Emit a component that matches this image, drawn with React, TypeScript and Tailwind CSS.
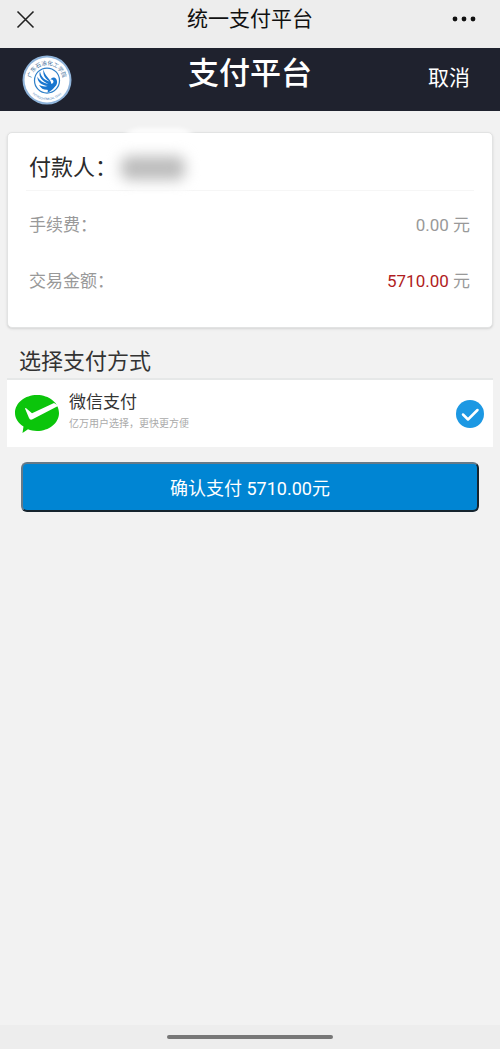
import { useState } from "react"

function SchoolLogo() {
  return (
    <svg viewBox="0 0 100 100" className="h-[50px] w-[50px]" role="img" aria-label="广东石油化工学院">
      <defs>
        <path id="logo-top" d="M18 52 A32 32 0 0 1 82 52" />
        <path id="logo-bottom" d="M8 48 A42 42 0 0 0 92 48" />
      </defs>
      <circle cx="50" cy="50" r="49" fill="#8fb4da" />
      <circle cx="50" cy="50" r="45" fill="#fff" />
      <text fontSize="11" fill="#3f6f9c">
        <textPath href="#logo-top" startOffset="50%" textAnchor="middle">
          广东石油化工学院
        </textPath>
      </text>
      <text fontSize="6" fill="#4f86bd">
        <textPath href="#logo-bottom" startOffset="50%" textAnchor="middle">
          PETROCHEMICAL TECH
        </textPath>
      </text>
      <circle cx="50" cy="51" r="25" fill="#fff" stroke="#2f80c8" strokeWidth="2.5" />
      {/* wings */}
      <path
        d="M43 29 C41 42 48 48 55 53 C47 51 38 45 36 33 C32 43 40 52 53 58 C43 56 34 51 31 43 C30 54 40 61 52 62 C46 64 40 63 34 60 C39 69 48 72 57 68 C67 66 73 57 69 49 C66 43 58 44 57 50 C60 48 63 50 63 54 C62 59 58 59 58 55 C57 48 46 43 43 29 Z"
        fill="#1976cf"
      />
      <path d="M45 65 C55 61 62 58 66 52 C69 62 62 71 51 75 C53 70 51 67 45 65 Z" fill="#1976cf" />
    </svg>
  )
}

function WechatPayIcon() {
  return (
    <svg viewBox="0 0 44 38" className="h-[38px] w-11 shrink-0" aria-hidden="true">
      <path
        d="M22 0 C34 0 44 7.8 44 18 C44 28.200 34 36 22 36 C18.500 36 15.500 35.400 13 34.300 L7.500 38 L8.500 31.500 C3.300 28.300 0 23.500 0 18 C0 7.800 10 0 22 0 Z"
        fill="#0bc50b"
      />
      <path d="M10 13.500 Q10.500 12.500 12 14 L17 18.200 L39 8 L43.500 10.700 L17.500 24.300 Q15 25.500 14 23 Z" fill="#fff" />
    </svg>
  )
}

function TitleBar() {
  return (
    <div className="grid h-12 grid-cols-[1fr_auto_1fr] items-center bg-[#ededed] px-4 pb-[10px]">
      <button type="button" aria-label="关闭" className="h-[19px] w-[19px]">
        <svg viewBox="0 0 19 19" fill="none" stroke="#222" strokeWidth="1.600">
          <path d="M1.500 1.500 L17.500 17.500 M17.500 1.500 L1.500 17.500" />
        </svg>
      </button>
      <h1 className="text-[21px] leading-8 text-[#111]">统一支付平台</h1>
      <button type="button" aria-label="更多" className="mr-2 justify-self-end">
        <svg viewBox="0 0 24 6" className="h-[6px] w-6" fill="#111">
          <circle cx="3" cy="3" r="2.400" />
          <circle cx="12" cy="3" r="2.400" />
          <circle cx="21" cy="3" r="2.400" />
        </svg>
      </button>
    </div>
  )
}

export default function App() {
  const [method, setMethod] = useState("wechat")

  return (
    <div className="flex min-h-screen flex-col bg-[#f2f2f2] font-[Roboto,'Noto_Sans_CJK_SC',sans-serif]">
      <TitleBar />

      <header className="grid h-[63px] grid-cols-[1fr_auto_1fr] items-center bg-[#1f222e] px-[22px]">
        <SchoolLogo />
        <h2 className="pb-3 text-[31px] leading-10 font-medium text-white">支付平台</h2>
        <button type="button" className="mr-2 justify-self-end pb-1 text-[21px] leading-8 text-white">
          取消
        </button>
      </header>

      <main className="flex flex-1 flex-col px-[7px] pt-[21px]">
        <section className="rounded-[5px] border border-[#e2e3e3] bg-white px-[18px] pb-6 shadow-sm">
          <div className="flex h-[58px] items-center border-b border-[#f6f6f6] px-[3px] pt-3 text-[22px] leading-8 text-[#2b2b2b]">
            <span>付款人：</span>
            {/* payer name stays masked */}
            <span className="relative h-8 w-[84px]" aria-hidden="true">
              <span className="absolute -top-6 right-0 -bottom-2 left-0 rounded-3xl bg-white/80 blur-[2px]" />
              <span className="absolute top-1 right-4 bottom-1 left-1 rounded-lg bg-[#bdbdbd] blur-[7px]" />
            </span>
          </div>
          <dl className="pr-1 pl-[3px] text-[17px] leading-6 text-[#999]">
            <div className="flex h-14 items-center justify-between pt-3">
              <dt>手续费：</dt>
              <dd>0.00 元</dd>
            </div>
            <div className="flex h-14 items-center justify-between pt-3">
              <dt>交易金额：</dt>
              <dd>
                <span className="text-[#b01c22]">5710.00</span> 元
              </dd>
            </div>
          </dl>
        </section>

        <h3 className="mt-[18px] border-b-2 border-[#e6e8e8] px-3 text-[22px] leading-8 text-[#333]">选择支付方式</h3>
        <label className="flex h-[67px] items-center bg-white pr-[9px] pl-2">
          <WechatPayIcon />
          <span className="ml-[10px] flex flex-1 flex-col">
            <span className="text-[17px] leading-6 text-[#333]">微信支付</span>
            <span className="pb-1 text-[10px] leading-5 text-[#aaa]">亿万用户选择，更快更方便</span>
          </span>
          <span className="relative h-7 w-7">
            <input
              type="radio"
              name="method"
              value="wechat"
              checked={method === "wechat"}
              onChange={(e) => setMethod(e.target.value)}
              className="block h-7 w-7 appearance-none rounded-full bg-[#1c98e3]"
            />
            <svg viewBox="0 0 28 28" className="pointer-events-none absolute inset-0" fill="none" stroke="#fff">
              <path d="M7 14.500 L12 19.500 L21.500 10" strokeWidth="2.500" strokeLinecap="round" strokeLinejoin="round" />
            </svg>
          </span>
        </label>

        <button
          type="button"
          className="mx-[14px] mt-[15px] h-[50px] rounded-md border-2 border-t-[#667a88] border-r-[#16242e] border-b-[#16242e] border-l-[#667a88] bg-[#0085d3] pt-1 text-[18px] leading-6 text-white"
        >
          确认支付 5710.00元
        </button>
      </main>

      <footer className="flex h-6 items-center justify-center bg-[#ededed]">
        <div className="h-1 w-1/3 rounded-full bg-[#777]" />
      </footer>
    </div>
  )
}
